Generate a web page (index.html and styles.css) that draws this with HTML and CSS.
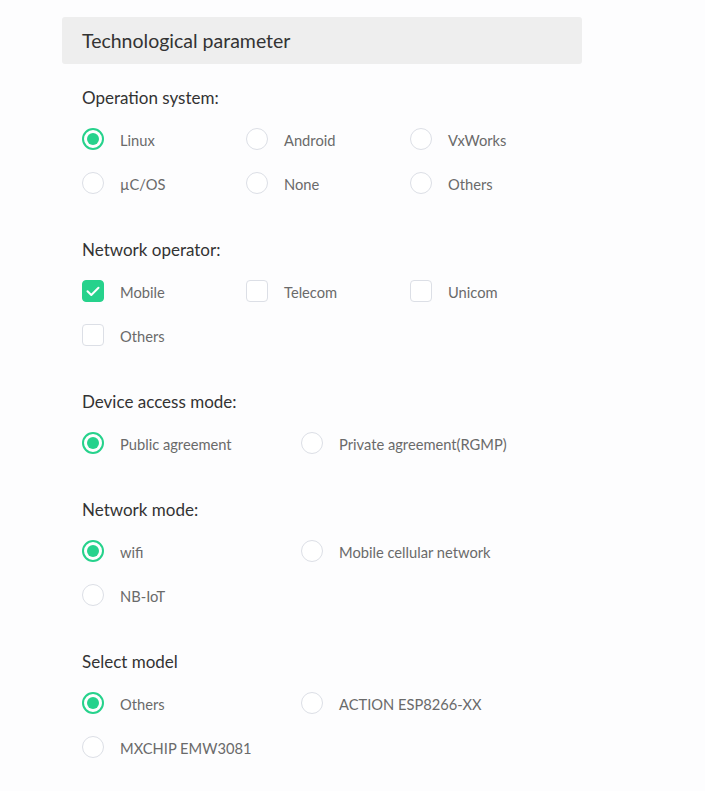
FILE: index.html
```html
<!DOCTYPE html>
<html>
<head>
<meta charset="utf-8">
<link rel="stylesheet" href="styles.css">
</head>
<body>
<div class="panel">
  <div class="panel-head">Technological parameter</div>
  <div class="panel-body">
    <div class="group">
      <div class="group-label">Operation system:</div>
      <div class="opts cols3">
        <label class="opt"><span class="radio on"></span><span class="txt">Linux</span></label>
        <label class="opt"><span class="radio"></span><span class="txt">Android</span></label>
        <label class="opt"><span class="radio"></span><span class="txt">VxWorks</span></label>
        <label class="opt"><span class="radio"></span><span class="txt">µC/OS</span></label>
        <label class="opt"><span class="radio"></span><span class="txt">None</span></label>
        <label class="opt"><span class="radio"></span><span class="txt">Others</span></label>
      </div>
    </div>
    <div class="group">
      <div class="group-label">Network operator:</div>
      <div class="opts cols3">
        <label class="opt"><span class="check on"><svg viewBox="0 0 22 22" width="22" height="22"><path d="M5.5 11.2 L9.3 15 L16.5 7.8" fill="none" stroke="#fff" stroke-width="2" stroke-linecap="round" stroke-linejoin="round"/></svg></span><span class="txt">Mobile</span></label>
        <label class="opt"><span class="check"></span><span class="txt">Telecom</span></label>
        <label class="opt"><span class="check"></span><span class="txt">Unicom</span></label>
        <label class="opt"><span class="check"></span><span class="txt">Others</span></label>
      </div>
    </div>
    <div class="group">
      <div class="group-label">Device access mode:</div>
      <div class="opts cols2">
        <label class="opt"><span class="radio on"></span><span class="txt">Public agreement</span></label>
        <label class="opt"><span class="radio"></span><span class="txt">Private agreement(RGMP)</span></label>
      </div>
    </div>
    <div class="group">
      <div class="group-label">Network mode:</div>
      <div class="opts cols2">
        <label class="opt"><span class="radio on"></span><span class="txt">wifi</span></label>
        <label class="opt"><span class="radio"></span><span class="txt">Mobile cellular network</span></label>
        <label class="opt"><span class="radio"></span><span class="txt">NB-IoT</span></label>
      </div>
    </div>
    <div class="group">
      <div class="group-label">Select model</div>
      <div class="opts cols2">
        <label class="opt"><span class="radio on"></span><span class="txt">Others</span></label>
        <label class="opt"><span class="radio"></span><span class="txt">ACTION ESP8266-XX</span></label>
        <label class="opt"><span class="radio"></span><span class="txt">MXCHIP EMW3081</span></label>
      </div>
    </div>
  </div>
</div>
</body>
</html>
```
FILE: styles.css
```css
html, body {
  margin: 0;
  padding: 0;
  background: #fdfdfe;
}
body {
  font-family: Lato, "Open Sans", sans-serif;
  padding: 17px 0 0 62px;
}
.panel {
  width: 520px;
}
.panel-head {
  background: #eeeeee;
  border-radius: 3px;
  height: 47px;
  line-height: 48px;
  padding-left: 20px;
  font-size: 19.5px;
  color: #333333;
}
.panel-body {
  padding: 21px 0 0 20px;
  display: flex;
  flex-direction: column;
  gap: 43px;
}
.group-label {
  box-sizing: border-box;
  font-size: 17px;
  color: #333333;
  height: 22px;
  line-height: 22px;
  padding-top: 2px;
}
.opts {
  display: grid;
  row-gap: 22px;
  margin-top: 21px;
}
.cols3 { grid-template-columns: 164px 164px 164px; }
.cols2 { grid-template-columns: 219px 219px; }
.opt {
  display: flex;
  align-items: center;
  height: 22px;
  gap: 16px;
}
.txt {
  font-size: 14.7px;
  color: #6a6a6a;
  white-space: nowrap;
  line-height: 22px;
  padding-top: 1px;
}
.radio, .check {
  box-sizing: border-box;
  width: 22px;
  height: 22px;
  border: 1px solid #dcdfe6;
  background: #fff;
  flex: none;
  display: flex;
  align-items: center;
  justify-content: center;
}
.radio { border-radius: 50%; }
.check { border-radius: 4px; }
.radio.on {
  border: 2px solid #26d28c;
}
.radio.on::after {
  content: "";
  width: 12px;
  height: 12px;
  border-radius: 50%;
  background: #26d28c;
}
.check.on {
  background: #26d28c;
  border-color: #26d28c;
}
.check.on svg { display: block; flex: none; }
```
